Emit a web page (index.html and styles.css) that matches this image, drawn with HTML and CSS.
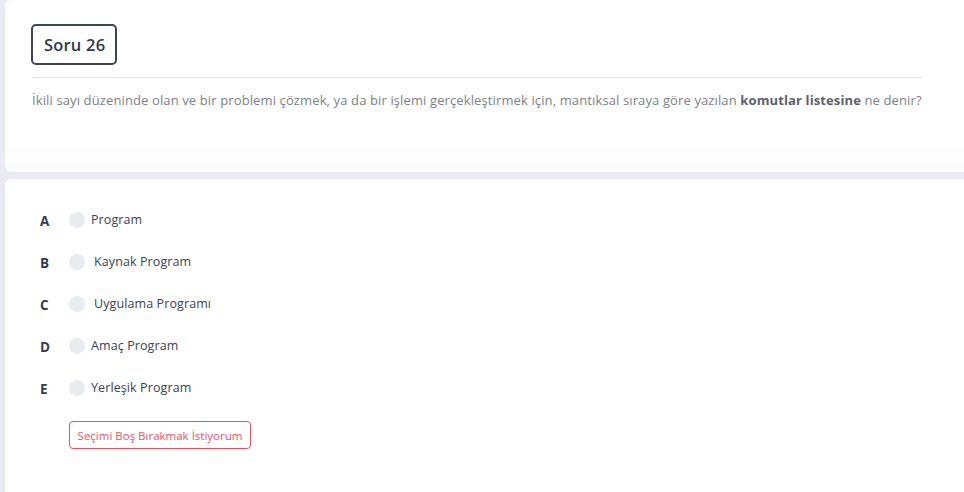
FILE: index.html
```html
<!DOCTYPE html>
<html lang="tr">
<head>
<meta charset="utf-8">
<link rel="stylesheet" href="styles.css">
</head>
<body>
<div class="page">
  <section class="card question-card">
    <div class="badge">Soru 26</div>
    <hr class="divider">
    <p class="question">İkili sayı düzeninde olan ve bir problemi çözmek, ya da bir işlemi gerçekleştirmek için, mantıksal sıraya göre yazılan <strong>komutlar listesine</strong> ne denir?</p>
  </section>
  <section class="card answers-card">
    <ul class="options">
      <li class="option"><span class="letter">A</span><span class="radio"></span><span class="label">Program</span></li>
      <li class="option"><span class="letter">B</span><span class="radio"></span><span class="label label-shift">Kaynak Program</span></li>
      <li class="option"><span class="letter">C</span><span class="radio"></span><span class="label label-shift">Uygulama Programı</span></li>
      <li class="option"><span class="letter">D</span><span class="radio"></span><span class="label">Amaç Program</span></li>
      <li class="option"><span class="letter">E</span><span class="radio"></span><span class="label">Yerleşik Program</span></li>
    </ul>
    <button class="clear-btn" type="button">Seçimi Boş Bırakmak İstiyorum</button>
  </section>
</div>
</body>
</html>
```
FILE: styles.css
```css
html, body {
  margin: 0;
  padding: 0;
  background: #e9eaf4;
  font-family: "Open Sans", "Noto Sans", sans-serif;
  overflow: hidden;
}
.page {
  padding-left: 5px;
  display: flex;
  flex-direction: column;
  gap: 7px;
  width: 970px;
}
.card {
  background: #ffffff;
  border-radius: 6px;
}
.question-card {
  height: 172px;
  box-sizing: border-box;
  padding: 24px 42px 0 26px;
  background: linear-gradient(to bottom, #ffffff 0, #ffffff 140px, #fbfbfd 172px);
}
.badge {
  display: inline-block;
  border: 2px solid #3e4556;
  border-radius: 5px;
  padding: 0 10px 0 11px;
  height: 37px;
  line-height: 37px;
  font-size: 16.5px;
  font-weight: 600;
  letter-spacing: 0.2px;
  color: #2f394b;
}
.divider {
  border: 0;
  border-top: 1px solid #e4e4e6;
  margin: 12px 0 0 1px;
  width: 890px;
}
.question {
  margin: 13px 0 0 1px;
  font-size: 13px;
  letter-spacing: 0.12px;
  color: #7c7f8b;
  line-height: 18px;
  white-space: nowrap;
}
.question strong {
  color: #5d616e;
  font-weight: 700;
}
.answers-card {
  height: 320px;
  box-sizing: border-box;
  padding: 33px 0 0 35px;
}
.options {
  list-style: none;
  margin: 0;
  padding: 0;
  display: flex;
  flex-direction: column;
  gap: 26px;
}
.option {
  display: flex;
  align-items: center;
  height: 16px;
}
.letter {
  width: 29px;
  font-size: 13.5px;
  font-weight: 700;
  color: #333d4f;
  padding-top: 2px;
}
.radio {
  width: 16px;
  height: 16px;
  border-radius: 50%;
  background: #e8ebf0;
  flex: none;
}
.label {
  margin-left: 6px;
  font-size: 12.5px;
  letter-spacing: 0.1px;
  color: #3a4356;
  margin-top: -2px;
}
.label-shift {
  margin-left: 9px;
}
.clear-btn {
  margin: 25px 0 0 29px;
  height: 28px;
  width: 182px;
  box-sizing: border-box;
  border: 1px solid #f04b5c;
  border-radius: 4px;
  background: #ffffff;
  color: #ef5466;
  font-family: inherit;
  font-size: 11.5px;
  letter-spacing: 0;
  padding: 0;
}
```
